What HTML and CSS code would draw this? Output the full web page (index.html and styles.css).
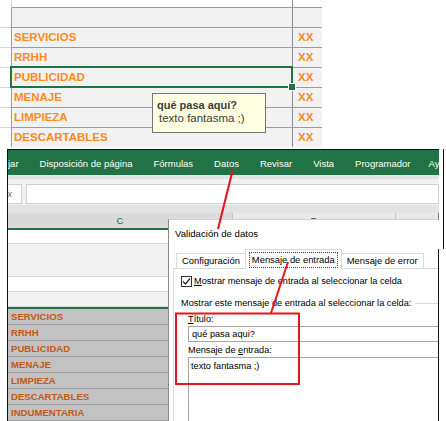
FILE: index.html
```html
<!DOCTYPE html>
<html lang="es">
<head>
<meta charset="utf-8">
<title>Validación de datos</title>
<link rel="stylesheet" href="styles.css">
</head>
<body>
<div class="page">
  <section class="top">
    <div class="trow head"><span class="g"></span><span class="b"></span><span class="c"></span></div>
    <div class="trow"><span class="g"></span><span class="b"></span><span class="c"></span></div>
    <div class="trow"><span class="g"></span><span class="b">SERVICIOS</span><span class="c">XX</span></div>
    <div class="trow"><span class="g"></span><span class="b">RRHH</span><span class="c">XX</span></div>
    <div class="trow sel"><span class="g"></span><span class="b">PUBLICIDAD</span><span class="c">XX</span></div>
    <div class="trow"><span class="g"></span><span class="b">MENAJE</span><span class="c">XX</span></div>
    <div class="trow"><span class="g"></span><span class="b">LIMPIEZA</span><span class="c">XX</span></div>
    <div class="trow last"><span class="g"></span><span class="b">DESCARTABLES</span><span class="c">XX</span></div>
    <div class="tip"><b>qué pasa aquí?</b><span>texto fantasma ;)</span></div>
  </section>

  <section class="shot">
    <nav class="ribbon">
      <span>jar</span><span>Disposición de página</span><span>Fórmulas</span><span>Datos</span><span>Revisar</span><span>Vista</span><span>Programador</span><span class="last">Ayuda</span>
    </nav>
    <div class="fbar"><span class="namebox"><i>fx</i></span><span class="finput"></span></div>
    <div class="band"></div>
    <div class="colhead"><span class="hc">C</span><span class="hd">D</span><span class="he"></span></div>
    <div class="cells">
      <div class="r w h14"></div>
      <div class="r gr h33"></div>
      <div class="r w h15"></div>
      <div class="r gr h15"></div>
      <div class="range">
        <div class="r s">SERVICIOS</div>
        <div class="r s">RRHH</div>
        <div class="r s">PUBLICIDAD</div>
        <div class="r s">MENAJE</div>
        <div class="r s">LIMPIEZA</div>
        <div class="r s">DESCARTABLES</div>
        <div class="r s">INDUMENTARIA</div>
      </div>
    </div>

    <div class="dialog">
      <div class="dlg-title">Validación de datos</div>
      <div class="tabs">
        <span class="tab">Configuración</span>
        <span class="tab active"><span class="focus">Mensaje de entrada</span></span>
        <span class="tab">Mensaje de error</span>
      </div>
      <div class="panel">
        <div class="chkrow">
          <span class="chk"><svg width="9" height="9" viewBox="0 0 9 9"><path d="M1 4.5 L3.5 7 L8 1.5" fill="none" stroke="#222" stroke-width="1.2"/></svg></span>
          <span><u>M</u>ostrar mensaje de entrada al seleccionar la celda</span>
        </div>
        <div class="group"><span>Mostrar este mensaje de entrada al seleccionar la celda:</span><span class="gline"></span></div>
        <div class="fields">
          <div class="lbl"><u>T</u>ítulo:</div>
          <div class="inp">qué pasa aqui?</div>
          <div class="lbl">Mensaje de <u>e</u>ntrada:</div>
          <div class="txa">texto fantasma ;)</div>
        </div>
      </div>
    </div>
  </section>

  <svg class="annot" width="446" height="421" viewBox="0 0 446 421">
    <line x1="233" y1="169" x2="218" y2="229" stroke="#e5141d" stroke-width="2"/>
    <line x1="288" y1="262" x2="271" y2="313" stroke="#e5141d" stroke-width="2"/>
    <rect x="176" y="313.5" width="123" height="70.5" fill="none" stroke="#e5141d" stroke-width="2"/>
  </svg>
</div>
</body>
</html>
```

FILE: styles.css
```css
* { box-sizing: border-box; }
html, body { margin: 0; padding: 0; }
body {
  width: 446px;
  height: 421px;
  overflow: hidden;
  background: #fff;
  font-family: "Liberation Sans", Arial, sans-serif;
}
.page { position: relative; width: 446px; height: 421px; overflow: hidden; }

/* ---------- top spreadsheet crop ---------- */
.top { position: relative; height: 149px; }
.trow {
  display: grid;
  grid-template-columns: 11px 282px 29px 1fr;
  height: 20px;
}
.trow > span { display: block; white-space: nowrap; }
.trow .g { border-bottom: 1px solid #d6d6d6; }
.trow .b {
  background: #f2f2f2;
  border-left: 1px solid #9b9b9b;
  border-right: 1px solid #8c8c8c;
  border-bottom: 1px solid #9b9b9b;
  padding-left: 2px;
}
.trow .c {
  background: #f2f2f2;
  border-bottom: 1px solid #9b9b9b;
  padding-left: 5px;
}
.trow .b, .trow .c {
  font-weight: 700;
  font-size: 11.5px;
  line-height: 19px;
  color: #fd8a1c;
}
.trow.head { height: 8px; }
.trow.head .g { border-bottom: 0; }
.trow.head .b { background: #fff; border-left-color: #d6d6d6; }
.trow.head .c { background: #fff; }
.trow.last { height: 18px; }
.trow.last > span { border-bottom: 0; }

.trow.sel .b { position: relative; }
.trow.sel .b::before {
  content: "";
  position: absolute;
  left: -2px; top: -2px; right: -1px; bottom: -1px;
  border: 2px solid #217346;
}
.trow.sel .b::after {
  content: "";
  position: absolute;
  right: -4px; bottom: -4px;
  width: 6px; height: 6px;
  background: #217346;
  border: 1px solid #fff;
}

.tip {
  position: absolute;
  left: 152px; top: 93px;
  width: 114px; height: 40px;
  background: #ffffe1;
  border: 1px solid #767676;
  padding: 5px 4px 0 4px;
  color: #3c3c3c;
  font-size: 11px;
  line-height: 13px;
  white-space: nowrap;
}
.tip b { display: block; font-weight: 700; }
.tip span { display: block; padding-left: 2px; font-size: 11.5px; }

/* ---------- lower screenshot ---------- */
.shot {
  position: relative;
  margin-left: 7px;
  width: 437px;
  height: 272px;
  border-left: 1px solid #111;
  overflow: hidden;
  background: #fff;
}
.shot::after {
  content: "";
  position: absolute;
  right: 0; top: 0;
  width: 1px; height: 100px;
  background: #111;
}
.ribbon, .fbar, .band, .colhead, .cells { margin-right: 5px; }
.ribbon {
  height: 26px;
  background: #217346;
  border-top: 1px solid #111;
  display: flex;
  align-items: center;
  gap: 21px;
  padding-top: 2px;
  color: #fff;
  font-size: 9.5px;
  white-space: nowrap;
  overflow: hidden;
}
.ribbon .last { margin-left: -3px; }
.fbar {
  height: 30px;
  background: #f1f1f1;
  border-top: 4px solid #e4e4e4;
  display: flex;
  gap: 4px;
  padding-top: 5px;
}
.namebox {
  width: 14px;
  height: 20px;
  background: #fff;
  border: 1px solid #d0d0d0;
  border-left: 0;
  overflow: hidden;
  font-size: 9px;
  line-height: 18px;
  color: #666;
}
.namebox i { display: block; margin-left: -3px; }
.finput {
  flex: 1;
  height: 20px;
  background: #fff;
  border: 1px solid #d0d0d0;
}
.band { height: 8px; background: #e2e2e2; }
.colhead {
  display: grid;
  grid-template-columns: 225px 163px 1fr;
  height: 17px;
  background: #e9e9e9;
  font-size: 9.5px;
  line-height: 15px;
  text-align: center;
  color: #444;
  border-right: 1px solid #777;
}
.colhead > span { border-right: 1px solid #c8c8c8; border-bottom: 2px solid #d0d0d0; }
.colhead .he { border-right: 0; }
.colhead .hc { color: #217346; background: #dadada; border-bottom-color: #217346; }

.cells { background: #fff; }
.r { border-bottom: 1px solid #d8d8d8; }
.r.gr { background: #f2f2f2; }
.h14 { height: 14px; }
.h33 { height: 33px; }
.h15 { height: 15px; }
.range { border-top: 2px solid #217346; }
.r.s {
  height: 16px;
  background: #c2c2c2;
  border-bottom: 1px solid #9c9c9c;
  padding-left: 3px;
  font-weight: 700;
  font-size: 9.6px;
  line-height: 15px;
  color: #c55a11;
}

/* ---------- dialog window ---------- */
.dialog {
  position: absolute;
  left: 160px; top: 70px;
  width: 271px; bottom: 0;
  background: #fff;
  border-left: 1px solid #8a8a8a;
  border-top: 1px solid #d0d0d0;
  font-size: 9.2px;
  color: #000;
  white-space: nowrap;
  z-index: 2;
  overflow: hidden;
}
.dialog::after {
  content: "";
  position: absolute;
  top: 29px; bottom: 0; right: 0;
  width: 1px;
  background: #111;
}
.dlg-title { height: 29px; padding: 8px 0 0 6px; line-height: 12px; font-size: 9.6px; }
.tabs {
  display: flex;
  align-items: flex-end;
  height: 19px;
  margin-left: 7px;
  position: relative;
  z-index: 1;
  font-size: 9.4px;
}
.tab {
  height: 15px;
  padding: 0 5px;
  border: 1px solid #d9d9d9;
  border-bottom: 0;
  line-height: 14px;
  background: #fff;
}
.tab + .tab { margin-left: -1px; }
.tab.active {
  height: 20px;
  margin-bottom: -1px;
  padding: 2px 3px 0 3px;
}
.focus { display: block; border: 1px dotted #444; padding: 0 2px; line-height: 14px; height: 16px; }
.panel {
  margin-left: 4px;
  border-left: 1px solid #d9d9d9;
  border-top: 1px solid #d9d9d9;
  padding: 7px 0 0 7px;
  height: 400px;
  overflow: hidden;
}
.chkrow { display: flex; align-items: center; gap: 2px; height: 11px; line-height: 11px; }
.chk {
  width: 11px; height: 11px;
  border: 1px solid #333;
  display: flex; align-items: center; justify-content: center;
}
.group { display: flex; align-items: center; margin-top: 10px; line-height: 12px; }
.gline { flex: 1; height: 1px; background: #dcdcdc; margin-left: 4px; }
.fields { padding-left: 7px; margin-top: 4px; }
.lbl { line-height: 12px; }
.inp, .txa {
  width: 300px;
  border: 1px solid #a5a5a5;
  padding-left: 3px;
}
.inp { height: 16px; line-height: 14px; margin: 1px 0 2px; }
.txa { height: 80px; margin-top: 1px; padding-top: 2px; padding-left: 2px; line-height: 12px; }

.annot { position: absolute; left: 0; top: 0; pointer-events: none; z-index: 5; }
```
